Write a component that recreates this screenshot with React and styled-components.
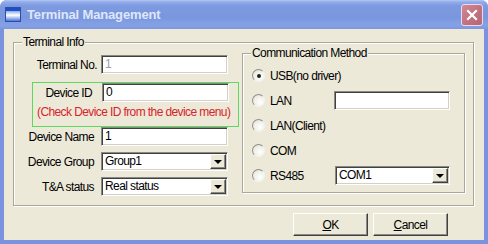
import React from "react";
import styled, { createGlobalStyle } from "styled-components";

const Global = createGlobalStyle`
  html, body { margin: 0; padding: 0; background: #ffffff; }
  body { font-family: "Liberation Sans", Arial, sans-serif; font-size: 12px; letter-spacing: -0.6px; }
  * { box-sizing: border-box; }
`;

const Window = styled.div`
  width: 488px;
  height: 244px;
  display: flex;
  flex-direction: column;
  background: #7b92df;
  border-radius: 7px 7px 0 0;
  overflow: hidden;
  position: relative;
`;

const TitleBar = styled.div`
  height: 29px;
  flex: none;
  display: flex;
  align-items: center;
  padding: 0 5px 0 5px;
  background: linear-gradient(
    to bottom,
    #b6c8f2 0px,
    #91acec 2px,
    #7d99df 6px,
    #7a96de 18px,
    #86a2e6 25px,
    #7d97df 29px
  );
`;

const TitleText = styled.span`
  font-family: "Liberation Sans", Arial, sans-serif;
  font-weight: bold;
  font-size: 13px;
  color: #dfe7f9;
  margin-left: 6px;
  flex: 1;
  letter-spacing: -0.15px;
`;

const CloseButton = styled.div`
  width: 22px;
  height: 22px;
  margin-top: 1px;
  border-radius: 3px;
  border: 1px solid #e6dcef;
  background: linear-gradient(135deg, #d08a95, #c06f7c 60%, #b86674);
  display: flex;
  align-items: center;
  justify-content: center;
`;

const Client = styled.div`
  flex: 1;
  margin: 0 4px 4px 4px;
  background: #ece9d8;
  display: flex;
  flex-direction: column;
  padding: 13px 0 0 9px;
`;

const Group = styled.div`
  position: relative;
  width: ${(p) => p.$w}px;
  height: ${(p) => p.$h}px;
  border: 1px solid #aca899;
  box-shadow: inset 1px 1px 0 #ffffff, 1px 1px 0 #ffffff;
`;

const Legend = styled.span`
  position: absolute;
  top: -8px;
  left: ${(p) => p.$left}px;
  padding: 0 1px;
  background: #ece9d8;
  line-height: 14px;
  color: #000;
`;

const GroupBody = styled.div`
  display: flex;
  height: 100%;
`;

const LeftColumn = styled.div`
  width: 228px;
  display: flex;
  flex-direction: column;
  padding-top: 12px;
`;

const Row = styled.div`
  display: flex;
  align-items: center;
  height: 19px;
  margin-top: ${(p) => p.$mt || 0}px;
`;

const Label = styled.span`
  width: ${(p) => p.$w}px;
  text-align: right;
  padding-right: ${(p) => p.$pr}px;
  color: #000;
  white-space: nowrap;
`;

const TextBox = styled.div`
  width: ${(p) => p.$w || 127}px;
  height: ${(p) => p.$h || 19}px;
  background: #ffffff;
  border-top: 1px solid #8a8a84;
  border-left: 1px solid #8a8a84;
  border-right: 1px solid #ffffff;
  border-bottom: 1px solid #ffffff;
  box-shadow: inset 1px 1px 0 #404040, inset -1px -1px 0 #d4d0c8;
  padding: 1px 0 0 3px;
  color: ${(p) => (p.$disabled ? "#a0a0a0" : "#000")};
  line-height: 14px;
  position: relative;
`;

const DropButton = styled.div`
  position: absolute;
  right: 1px;
  top: 1px;
  bottom: 1px;
  width: 16px;
  background: #ece9d8;
  border-top: 1px solid #ffffff;
  border-left: 1px solid #ffffff;
  border-right: 1px solid #404040;
  border-bottom: 1px solid #404040;
  box-shadow: inset -1px -1px 0 #8a8a84;
  display: flex;
  align-items: center;
  justify-content: center;
`;

const Arrow = styled.span`
  width: 0;
  height: 0;
  border-left: 4px solid transparent;
  border-right: 4px solid transparent;
  border-top: 4px solid #000;
  margin-top: 1px;
`;

const HintBox = styled.div`
  margin: 8px 0 0 18px;
  width: 207px;
  height: 45px;
  border: 1px solid #5fd85f;
  display: flex;
  flex-direction: column;
`;

const HintRow = styled.div`
  display: flex;
  align-items: center;
  height: 19px;
`;

const HintText = styled.div`
  color: #d8232a;
  padding-left: 4px;
  margin-top: 3px;
  white-space: nowrap;
`;

const RightGroupWrap = styled.div`
  padding-top: 10px;
`;

const RadioList = styled.div`
  display: flex;
  flex-direction: column;
  padding: 12px 0 0 9px;
`;

const RadioRow = styled.div`
  display: flex;
  align-items: center;
  height: 19px;
  margin-bottom: 6px;
`;

const RadioCircle = styled.span`
  width: 13px;
  height: 13px;
  border-radius: 50%;
  border: 1px solid;
  border-color: #8f8f8a #f4f4f0 #f4f4f0 #8f8f8a;
  background: radial-gradient(circle at 65% 65%, #ffffff 0%, #f0efe8 55%, #dcdad0 100%);
  display: flex;
  align-items: center;
  justify-content: center;
  flex: none;
`;

const RadioDot = styled.span`
  width: 4px;
  height: 4px;
  border-radius: 50%;
  background: #202020;
`;

const RadioLabel = styled.span`
  margin-left: 5px;
  width: ${(p) => p.$w || "auto"};
  color: #000;
  white-space: nowrap;
`;

const ButtonRow = styled.div`
  display: flex;
  justify-content: flex-end;
  gap: 5px;
  padding-right: 36px;
  margin-top: 7px;
`;

const Button = styled.div`
  width: ${(p) => p.$w}px;
  height: 23px;
  background: #ece9d8;
  border-top: 1px solid #ffffff;
  border-left: 1px solid #ffffff;
  border-right: 1px solid #404040;
  border-bottom: 1px solid #404040;
  box-shadow: inset -1px -1px 0 #8a8a84;
  display: flex;
  align-items: center;
  justify-content: center;
  color: #000;
  padding-top: 1px;
`;

const Accel = styled.span`
  text-decoration: underline;
`;

function AppIcon() {
  return (
    <svg width="16" height="15" viewBox="0 0 16 15">
      <defs>
        <linearGradient id="ig" x1="0" y1="0" x2="0" y2="1">
          <stop offset="0" stopColor="#2a5fcf" />
          <stop offset="0.45" stopColor="#d6e4fb" />
          <stop offset="0.55" stopColor="#ffffff" />
          <stop offset="1" stopColor="#3a6ad4" />
        </linearGradient>
      </defs>
      <rect x="0.5" y="0.5" width="15" height="14" fill="url(#ig)" stroke="#2a4fa8" />
      <rect x="1" y="1" width="14" height="3" fill="#1f4fc4" />
    </svg>
  );
}

function Combo({ value, w }) {
  return (
    <TextBox $w={w}>
      {value}
      <DropButton>
        <Arrow />
      </DropButton>
    </TextBox>
  );
}

function Radio({ checked, label, w, children }) {
  return (
    <RadioRow>
      <RadioCircle>{checked && <RadioDot />}</RadioCircle>
      <RadioLabel $w={w}>{label}</RadioLabel>
      {children}
    </RadioRow>
  );
}

export default function App() {
  return (
    <>
      <Global />
      <Window>
        <TitleBar>
          <AppIcon />
          <TitleText>Terminal Management</TitleText>
          <CloseButton>
            <svg width="12" height="12" viewBox="0 0 12 12">
              <path d="M2 2 L10 10 M10 2 L2 10" stroke="#ffffff" strokeWidth="2.2" strokeLinecap="square" />
            </svg>
          </CloseButton>
        </TitleBar>
        <Client>
          <Group $w={461} $h={164}>
            <Legend $left={8}>Terminal Info</Legend>
            <GroupBody>
              <LeftColumn>
                <Row>
                  <Label $w={87} $pr={4}>Terminal No.</Label>
                  <TextBox $disabled>1</TextBox>
                </Row>
                <HintBox>
                  <HintRow>
                    <Label $w={69} $pr={10}>Device ID</Label>
                    <TextBox>0</TextBox>
                  </HintRow>
                  <HintText>(Check Device ID from the device menu)</HintText>
                </HintBox>
                <Row $mt={0}>
                  <Label $w={87} $pr={7}>Device Name</Label>
                  <TextBox>1</TextBox>
                </Row>
                <Row $mt={6}>
                  <Label $w={87} $pr={7}>Device Group</Label>
                  <Combo value="Group1" />
                </Row>
                <Row $mt={6}>
                  <Label $w={87} $pr={7}>T&amp;A status</Label>
                  <Combo value="Real status" />
                </Row>
              </LeftColumn>
              <RightGroupWrap>
                <Group $w={223} $h={140}>
                  <Legend $left={8}>Communication Method</Legend>
                  <RadioList>
                    <Radio checked label="USB(no driver)" />
                    <Radio label="LAN" w="64px">
                      <TextBox $w={116}></TextBox>
                    </Radio>
                    <Radio label="LAN(Client)" />
                    <Radio label="COM" />
                    <Radio label="RS485" w="65px">
                      <Combo value="COM1" w={115} />
                    </Radio>
                  </RadioList>
                </Group>
              </RightGroupWrap>
            </GroupBody>
          </Group>
          <ButtonRow>
            <Button $w={75}>
              <span>
                <Accel>O</Accel>K
              </span>
            </Button>
            <Button $w={75}>
              <span>
                <Accel>C</Accel>ancel
              </span>
            </Button>
          </ButtonRow>
        </Client>
      </Window>
    </>
  );
}
